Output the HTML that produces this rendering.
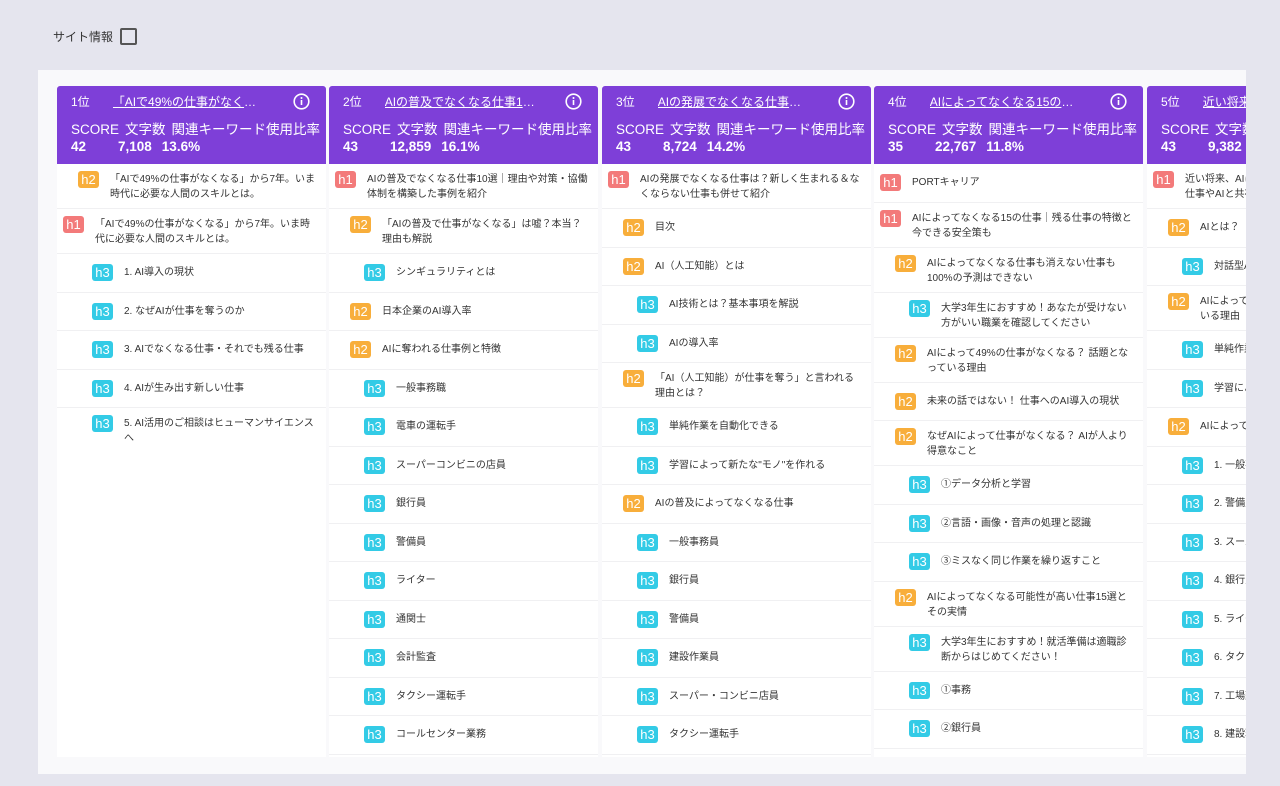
<!DOCTYPE html><html><head><meta charset="utf-8"><style>
*{box-sizing:border-box;margin:0;padding:0}
body{width:1280px;height:786px;overflow:hidden;background:#e5e5ee;font-family:"Liberation Sans","Noto Sans CJK JP",sans-serif;color:#333;position:relative}
.top{position:absolute;left:53px;top:28px;font-size:12px;color:#333;display:flex;align-items:center}
.cb{width:17px;height:17px;border:2px solid #555;border-radius:2px;margin-left:7px}
.wrap{position:absolute;left:38px;top:70px;width:1208px;height:704px;background:#f9f9fb;overflow:hidden}
.col{position:absolute;top:16px;width:269px;height:671px;background:#fff;overflow:hidden}
.hd{height:78px;background:#7e3fd8;color:#fff;border-radius:3px 3px 0 0;padding:7px 14px 0 14px;position:relative}
.r1{font-size:12px;display:flex;height:16px;align-items:center}
.r1 .t{margin-left:23px;text-decoration:underline;white-space:nowrap;overflow:hidden;width:155px;text-overflow:ellipsis}
.ic{position:absolute;right:16px;top:7px;width:17px;height:17px}
.r2{font-size:13.5px;margin-top:9px;white-space:nowrap}
.r2 span{margin-right:6px}
.r3{font-size:13.5px;font-weight:bold;margin-top:1px;white-space:nowrap}
.r3 span{display:inline-block}
.r3 .a{width:47px}.r3 .c{margin-right:10px}
.row{border-bottom:1.5px solid #f0f0f2;display:flex;align-items:center;font-size:10px;line-height:15px;height:38.5px;color:#333}
.row.d{height:45px;align-items:flex-start;padding-top:8px}
.b{flex:none;width:21px;height:17px;border-radius:3px;color:#fff;font-size:13px;line-height:17px;text-align:center;margin-right:11px}
.d .b{margin-top:-1px}
.h1 .b{background:#f37a7a}.h2 .b{background:#f8ae3b}.h3 .b{background:#33cbe6}
.h1{padding-left:6px}.h2{padding-left:21px}.h3{padding-left:35px}
.row .x{padding-right:10px}
</style></head><body>
<div class="top">サイト情報<div class="cb"></div></div>
<div class="wrap">

<div class="col" style="left:19px">
<div class="hd"><div class="r1">1位<span class="t">「AIで49%の仕事がなくなる…</span></div><svg class="ic" viewBox="0 0 17 17"><circle cx="8.5" cy="8.5" r="7.3" fill="none" stroke="#fff" stroke-width="1.6"/><rect x="7.7" y="7" width="1.6" height="5" fill="#fff"/><circle cx="8.5" cy="5" r="1" fill="#fff"/></svg>
<div class="r2"><span>SCORE</span><span>文字数</span>関連キーワード使用比率</div>
<div class="r3"><span class="a">42</span><span class="c">7,108</span>13.6%</div></div>
<div class="row h2 d"><div class="b">h2</div><div class="x">「AIで49%の仕事がなくなる」から7年。いま時代に必要な人間のスキルとは。</div></div>
<div class="row h1 d"><div class="b">h1</div><div class="x">「AIで49%の仕事がなくなる」から7年。いま時代に必要な人間のスキルとは。</div></div>
<div class="row h3"><div class="b">h3</div><div class="x">1. AI導入の現状</div></div>
<div class="row h3"><div class="b">h3</div><div class="x">2. なぜAIが仕事を奪うのか</div></div>
<div class="row h3"><div class="b">h3</div><div class="x">3. AIでなくなる仕事・それでも残る仕事</div></div>
<div class="row h3"><div class="b">h3</div><div class="x">4. AIが生み出す新しい仕事</div></div>
<div class="row h3 d" style="border:none"><div class="b">h3</div><div class="x">5. AI活用のご相談はヒューマンサイエンスへ</div></div>
</div>

<div class="col" style="left:291px">
<div class="hd"><div class="r1">2位<span class="t">AIの普及でなくなる仕事10選…</span></div><svg class="ic" viewBox="0 0 17 17"><circle cx="8.5" cy="8.5" r="7.3" fill="none" stroke="#fff" stroke-width="1.6"/><rect x="7.7" y="7" width="1.6" height="5" fill="#fff"/><circle cx="8.5" cy="5" r="1" fill="#fff"/></svg>
<div class="r2"><span>SCORE</span><span>文字数</span>関連キーワード使用比率</div>
<div class="r3"><span class="a">43</span><span class="c">12,859</span>16.1%</div></div>
<div class="row h1 d"><div class="b">h1</div><div class="x">AIの普及でなくなる仕事10選｜理由や対策・協働体制を構築した事例を紹介</div></div>
<div class="row h2 d"><div class="b">h2</div><div class="x">「AIの普及で仕事がなくなる」は嘘？本当？理由も解説</div></div>
<div class="row h3"><div class="b">h3</div><div class="x">シンギュラリティとは</div></div>
<div class="row h2"><div class="b">h2</div><div class="x">日本企業のAI導入率</div></div>
<div class="row h2"><div class="b">h2</div><div class="x">AIに奪われる仕事例と特徴</div></div>
<div class="row h3"><div class="b">h3</div><div class="x">一般事務職</div></div>
<div class="row h3"><div class="b">h3</div><div class="x">電車の運転手</div></div>
<div class="row h3"><div class="b">h3</div><div class="x">スーパーコンビニの店員</div></div>
<div class="row h3"><div class="b">h3</div><div class="x">銀行員</div></div>
<div class="row h3"><div class="b">h3</div><div class="x">警備員</div></div>
<div class="row h3"><div class="b">h3</div><div class="x">ライター</div></div>
<div class="row h3"><div class="b">h3</div><div class="x">通関士</div></div>
<div class="row h3"><div class="b">h3</div><div class="x">会計監査</div></div>
<div class="row h3"><div class="b">h3</div><div class="x">タクシー運転手</div></div>
<div class="row h3"><div class="b">h3</div><div class="x">コールセンター業務</div></div>
</div>

<div class="col" style="left:564px">
<div class="hd"><div class="r1">3位<span class="t">AIの発展でなくなる仕事は？…</span></div><svg class="ic" viewBox="0 0 17 17"><circle cx="8.5" cy="8.5" r="7.3" fill="none" stroke="#fff" stroke-width="1.6"/><rect x="7.7" y="7" width="1.6" height="5" fill="#fff"/><circle cx="8.5" cy="5" r="1" fill="#fff"/></svg>
<div class="r2"><span>SCORE</span><span>文字数</span>関連キーワード使用比率</div>
<div class="r3"><span class="a">43</span><span class="c">8,724</span>14.2%</div></div>
<div class="row h1 d"><div class="b">h1</div><div class="x">AIの発展でなくなる仕事は？新しく生まれる＆なくならない仕事も併せて紹介</div></div>
<div class="row h2"><div class="b">h2</div><div class="x">目次</div></div>
<div class="row h2"><div class="b">h2</div><div class="x">AI（人工知能）とは</div></div>
<div class="row h3"><div class="b">h3</div><div class="x">AI技術とは？基本事項を解説</div></div>
<div class="row h3"><div class="b">h3</div><div class="x">AIの導入率</div></div>
<div class="row h2 d"><div class="b">h2</div><div class="x">「AI（人工知能）が仕事を奪う」と言われる理由とは？</div></div>
<div class="row h3"><div class="b">h3</div><div class="x">単純作業を自動化できる</div></div>
<div class="row h3"><div class="b">h3</div><div class="x">学習によって新たな"モノ"を作れる</div></div>
<div class="row h2"><div class="b">h2</div><div class="x">AIの普及によってなくなる仕事</div></div>
<div class="row h3"><div class="b">h3</div><div class="x">一般事務員</div></div>
<div class="row h3"><div class="b">h3</div><div class="x">銀行員</div></div>
<div class="row h3"><div class="b">h3</div><div class="x">警備員</div></div>
<div class="row h3"><div class="b">h3</div><div class="x">建設作業員</div></div>
<div class="row h3"><div class="b">h3</div><div class="x">スーパー・コンビニ店員</div></div>
<div class="row h3"><div class="b">h3</div><div class="x">タクシー運転手</div></div>
</div>

<div class="col" style="left:836px">
<div class="hd"><div class="r1">4位<span class="t">AIによってなくなる15の仕事…</span></div><svg class="ic" viewBox="0 0 17 17"><circle cx="8.5" cy="8.5" r="7.3" fill="none" stroke="#fff" stroke-width="1.6"/><rect x="7.7" y="7" width="1.6" height="5" fill="#fff"/><circle cx="8.5" cy="5" r="1" fill="#fff"/></svg>
<div class="r2"><span>SCORE</span><span>文字数</span>関連キーワード使用比率</div>
<div class="r3"><span class="a">35</span><span class="c">22,767</span>11.8%</div></div>
<div class="row h1"><div class="b">h1</div><div class="x">PORTキャリア</div></div>
<div class="row h1 d"><div class="b">h1</div><div class="x">AIによってなくなる15の仕事｜残る仕事の特徴と今できる安全策も</div></div>
<div class="row h2 d"><div class="b">h2</div><div class="x">AIによってなくなる仕事も消えない仕事も100%の予測はできない</div></div>
<div class="row h3 d"><div class="b">h3</div><div class="x">大学3年生におすすめ！あなたが受けない方がいい職業を確認してください</div></div>
<div class="row h2 d"><div class="b">h2</div><div class="x">AIによって49%の仕事がなくなる？ 話題となっている理由</div></div>
<div class="row h2"><div class="b">h2</div><div class="x">未来の話ではない！ 仕事へのAI導入の現状</div></div>
<div class="row h2 d"><div class="b">h2</div><div class="x">なぜAIによって仕事がなくなる？ AIが人より得意なこと</div></div>
<div class="row h3"><div class="b">h3</div><div class="x">①データ分析と学習</div></div>
<div class="row h3"><div class="b">h3</div><div class="x">②言語・画像・音声の処理と認識</div></div>
<div class="row h3"><div class="b">h3</div><div class="x">③ミスなく同じ作業を繰り返すこと</div></div>
<div class="row h2 d"><div class="b">h2</div><div class="x">AIによってなくなる可能性が高い仕事15選とその実情</div></div>
<div class="row h3 d"><div class="b">h3</div><div class="x">大学3年生におすすめ！就活準備は適職診断からはじめてください！</div></div>
<div class="row h3"><div class="b">h3</div><div class="x">①事務</div></div>
<div class="row h3"><div class="b">h3</div><div class="x">②銀行員</div></div>
</div>

<div class="col" style="left:1109px">
<div class="hd"><div class="r1">5位<span class="t">近い将来、AIに奪われる仕事…</span></div>
<div class="r2"><span>SCORE</span><span>文字数</span>関連キーワード使用比率</div>
<div class="r3"><span class="a">43</span><span class="c">9,382</span></div></div>
<div class="row h1 d"><div class="b">h1</div><div class="x" style="white-space:nowrap">近い将来、AIに奪われる仕事<br>仕事やAIと共存する仕事</div></div>
<div class="row h2"><div class="b">h2</div><div class="x">AIとは？</div></div>
<div class="row h3"><div class="b">h3</div><div class="x">対話型AIとは</div></div>
<div class="row h2 d"><div class="b">h2</div><div class="x" style="white-space:nowrap">AIによって人間の仕事が奪われて<br>いる理由</div></div>
<div class="row h3"><div class="b">h3</div><div class="x">単純作業</div></div>
<div class="row h3"><div class="b">h3</div><div class="x">学習による</div></div>
<div class="row h2"><div class="b">h2</div><div class="x">AIによって奪われる</div></div>
<div class="row h3"><div class="b">h3</div><div class="x">1. 一般事務</div></div>
<div class="row h3"><div class="b">h3</div><div class="x">2. 警備員</div></div>
<div class="row h3"><div class="b">h3</div><div class="x">3. スーパー</div></div>
<div class="row h3"><div class="b">h3</div><div class="x">4. 銀行員</div></div>
<div class="row h3"><div class="b">h3</div><div class="x">5. ライター</div></div>
<div class="row h3"><div class="b">h3</div><div class="x">6. タクシー</div></div>
<div class="row h3"><div class="b">h3</div><div class="x">7. 工場勤務</div></div>
<div class="row h3"><div class="b">h3</div><div class="x">8. 建設現場</div></div>
</div>

</div>
</body></html>
